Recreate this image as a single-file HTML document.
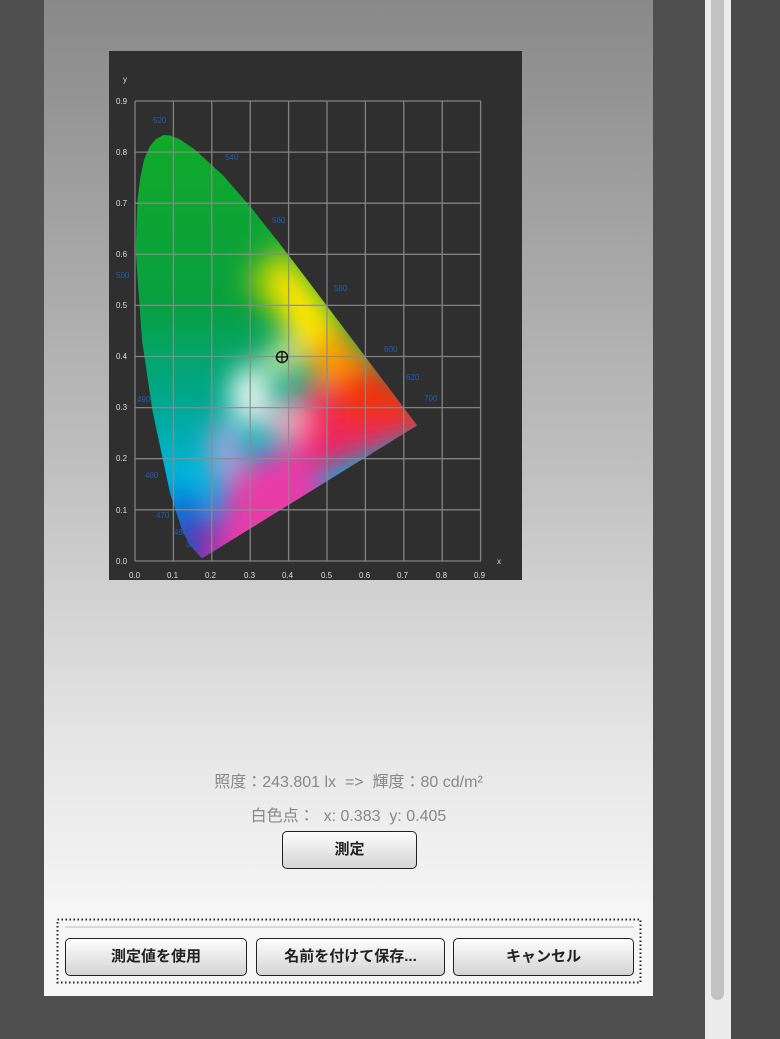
<!DOCTYPE html>
<html><head><meta charset="utf-8"><style>
body{margin:0;width:780px;height:1039px;background:#4f4f4f;position:relative;overflow:hidden;font-family:"Liberation Sans","Noto Sans CJK JP",sans-serif}
#panel{position:absolute;left:44px;top:0;width:609px;height:996px;background:linear-gradient(#898989 0%,#bdbdbd 45%,#e6e6e6 75%,#f2f2f2 88%,#fafafa 100%)}
#panel .bot{position:absolute;left:0;right:0;top:900px;bottom:0;background:#f6f6f6}
#sb{position:absolute;left:705px;top:0;width:26px;height:1039px;background:#ececec}
#thumb{position:absolute;left:711px;top:0;width:13px;height:1000px;background:#c2c2c2;border-radius:0 0 7px 7px}
#rd{position:absolute;left:731px;top:0;width:49px;height:1039px;background:#4a4a4a}
.t{position:absolute;left:44px;width:609px;text-align:center;color:#888;font-size:16px}
.btn{position:absolute;box-sizing:border-box;border:1.5px solid #222;border-radius:5px;background:linear-gradient(#fdfdfd,#e4e4e4 60%,#d4d4d4);font-size:15px;color:#222;text-align:center;font-weight:bold}
</style></head><body>
<div id="panel"><div class="bot"></div></div>
<div id="sb"></div><div id="thumb"></div><div id="rd"></div>
<svg style="position:absolute;left:0;top:0" width="780" height="1039">
<defs>
<clipPath id="cl"><path d="M201.9,558.4 L190.3,545.8 182.7,531.5 170.1,493.2 152.4,410.3 142,340 138.1,285.9 135.8,250 136.5,226.4 137.5,200 140.3,177.6 144,160 149.9,146.1 156,139 163.5,135 170,135.5 178.9,138.8 194.4,149.2 223.2,175.5 250.8,207.2 278.3,241.9 305.5,277.5 331.8,312.4 355.9,344.2 375.8,370.7 400.5,403.5 417.1,425.4 Z"/></clipPath>
<filter id="bl" x="-50%" y="-50%" width="200%" height="200%"><feGaussianBlur stdDeviation="14"/></filter>
<linearGradient id="bg" x1="0" y1="0" x2="0" y2="1"><stop offset="0" stop-color="#10aa28"/><stop offset="0.4" stop-color="#08a040"/><stop offset="0.62" stop-color="#00a890"/><stop offset="0.78" stop-color="#00b4d8"/><stop offset="0.88" stop-color="#00a0f0"/><stop offset="1" stop-color="#2030a0"/></linearGradient>
</defs>
<rect x="109" y="51" width="413" height="529" fill="#2f2f2f"/>
<g clip-path="url(#cl)">
<rect x="130" y="130" width="300" height="440" fill="url(#bg)"/>
<g filter="url(#bl)">
<polygon points="240,500 460,420 380,370 300,390 250,600" fill="#f0206a"/>
<polygon points="200,600 340,520 300,440 230,470" fill="#e83aa8"/>
<polygon points="360,350 450,425 330,430 330,380" fill="#f03010"/>
<polygon points="300,280 370,360 320,390 290,330" fill="#ff9a00"/>
<polygon points="280,240 340,320 300,360 270,300" fill="#ffe800"/>
<ellipse cx="262" cy="280" rx="12" ry="22" fill="#a0cc00"/>
<ellipse cx="250" cy="395" rx="18" ry="30" fill="#ffffff"/>
<ellipse cx="280" cy="360" rx="14" ry="16" fill="#fff8b0"/>
<ellipse cx="285" cy="420" rx="20" ry="18" fill="#ffb0c8"/>
<ellipse cx="200" cy="545" rx="20" ry="22" fill="#6a30b0"/>
<ellipse cx="183" cy="515" rx="12" ry="20" fill="#1840b8"/>
<ellipse cx="225" cy="450" rx="14" ry="30" fill="#c0a0e0"/>
</g></g>
<g stroke="#8c8c8c" stroke-width="1.3" fill="none" opacity="0.9">
<path d="M135,101V561M173.4,101V561M211.8,101V561M250.2,101V561M288.6,101V561M327,101V561M365.4,101V561M403.8,101V561M442.2,101V561M480.6,101V561"/>
<path d="M135,101H481M135,152.1H481M135,203.2H481M135,254.3H481M135,305.4H481M135,356.5H481M135,407.6H481M135,458.7H481M135,509.8H481M135,561H481"/>
</g>
<g fill="#ddd" font-size="8" font-family="Liberation Sans,sans-serif">
<text x="123" y="82">y</text><text x="497" y="564">x</text>
<text x="116" y="104">0.9</text><text x="116" y="155">0.8</text><text x="116" y="206">0.7</text><text x="116" y="257">0.6</text><text x="116" y="308">0.5</text><text x="116" y="359">0.4</text><text x="116" y="410">0.3</text><text x="116" y="461">0.2</text><text x="116" y="513">0.1</text><text x="116" y="564">0.0</text>
<text x="129" y="578">0.0</text><text x="167" y="578">0.1</text><text x="205" y="578">0.2</text><text x="244" y="578">0.3</text><text x="282" y="578">0.4</text><text x="321" y="578">0.5</text><text x="359" y="578">0.6</text><text x="397" y="578">0.7</text><text x="436" y="578">0.8</text><text x="474" y="578">0.9</text>
</g>
<g fill="#1f5fb0" font-size="8" font-family="Liberation Sans,sans-serif">
<text x="153" y="123">520</text><text x="225" y="160">540</text><text x="272" y="223">560</text><text x="116" y="278">500</text><text x="334" y="291">580</text><text x="384" y="352">600</text><text x="406" y="380">620</text><text x="424" y="401">700</text><text x="137" y="402">490</text><text x="145" y="478">480</text><text x="156" y="518">470</text><text x="174" y="535">460</text><text x="186" y="547">380</text>
</g>
<circle cx="282" cy="357" r="5.5" fill="none" stroke="#111" stroke-width="1.5"/>
<path d="M276,357H288M282,351V363" stroke="#111" stroke-width="1.3"/>
<rect x="57.5" y="919.5" width="583" height="63" fill="none" stroke="#222" stroke-width="2" stroke-dasharray="1.5 2.5"/>
<line x1="65" y1="927" x2="634" y2="927" stroke="#cfcfcf" stroke-width="1.5"/>
</svg>
<div class="t" style="top:768px">照度：243.801 lx &nbsp;=&gt; &nbsp;輝度：80 cd/m²</div>
<div class="t" style="top:802px">白色点： &nbsp;x: 0.383 &nbsp;y: 0.405</div>
<div class="btn" style="left:282px;top:831px;width:135px;height:38px;line-height:35px">測定</div>
<div class="btn" style="left:65px;top:938px;width:182px;height:38px;line-height:35px">測定値を使用</div>
<div class="btn" style="left:256px;top:938px;width:189px;height:38px;line-height:35px">名前を付けて保存...</div>
<div class="btn" style="left:453px;top:938px;width:181px;height:38px;line-height:35px">キャンセル</div>
</body></html>
